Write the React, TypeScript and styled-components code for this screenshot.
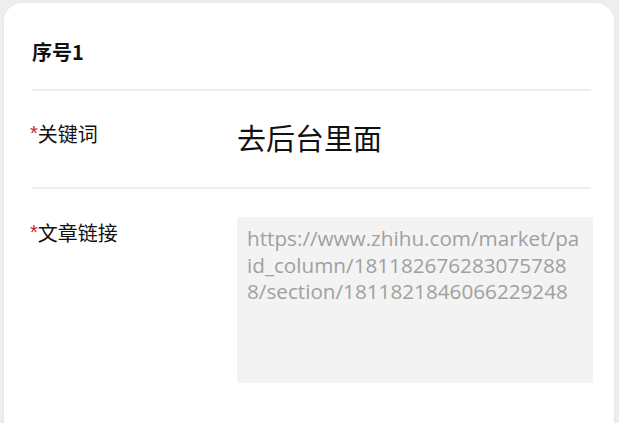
import React from "react";
import styled, { createGlobalStyle } from "styled-components";

const GlobalStyle = createGlobalStyle`
  html, body {
    margin: 0;
    padding: 0;
    background: #eeeeee;
    font-family: "Open Sans", "Noto Sans CJK SC", sans-serif;
    overflow: hidden;
  }
`;

const Card = styled.div`
  margin: 3px 5px 0 4px;
  min-height: 440px;
  background: #ffffff;
  border-radius: 18px 18px 0 0;
  box-shadow: 0 0 3px rgba(0, 0, 0, 0.06);
  padding: 0 21px 0 28px;
  box-sizing: border-box;
`;

const Header = styled.div`
  padding: 31px 0 19px 0;
  margin-right: 2px;
  border-bottom: 2px solid #eeeeee;
`;

const Title = styled.h2`
  margin: 0;
  font-family: "Noto Sans CJK SC", sans-serif;
  font-size: 20px;
  line-height: 36px;
  font-weight: 700;
  color: #111111;
`;

const Row = styled.div<{ divider?: boolean; pad: number }>`
  display: flex;
  align-items: flex-start;
  padding-top: ${(p) => p.pad}px;
  min-height: 98px;
  box-sizing: border-box;
  margin-right: ${(p) => (p.divider ? 2 : 0)}px;
  border-bottom: ${(p) => (p.divider ? "2px solid #eeeeee" : "none")};
`;

const Label = styled.div<{ offset: number }>`
  width: 205px;
  flex-shrink: 0;
  margin-top: ${(p) => p.offset}px;
  font-family: "Noto Sans CJK SC", sans-serif;
  font-size: 20px;
  line-height: 28px;
  color: #111111;
`;

const Star = styled.span`
  margin-left: -2px;
  color: #c8202a;
  font-family: "Liberation Sans", sans-serif;
  font-size: 20px;
  vertical-align: 2px;
`;

const Value = styled.div`
  margin-top: -1px;
  font-family: "Noto Sans CJK SC", sans-serif;
  font-size: 29px;
  line-height: 36px;
  color: #111111;
`;

const TextBox = styled.div`
  flex: 1;
  height: 166px;
  box-sizing: border-box;
  padding: 8px 6px 10px 10px;
  background: #f3f3f3;
  color: #a0a0a0;
  font-family: "Open Sans", sans-serif;
  font-size: 20.7px;
  line-height: 26.5px;
  word-break: break-all;
`;

const TextLine = styled.span`
  display: block;
  white-space: nowrap;
`;

// the link as it wraps in the original field
const linkLines = [
  "https://www.zhihu.com/market/pa",
  "id_column/181182676283075788",
  "8/section/1811821846066229248",
];

export default function App() {
  return (
    <>
      <GlobalStyle />
      <Card>
        <Header>
          <Title>序号1</Title>
        </Header>
        <Row divider pad={29}>
          <Label offset={-1}>
            <Star>*</Star>关键词
          </Label>
          <Value>去后台里面</Value>
        </Row>
        <Row pad={28}>
          <Label offset={1}>
            <Star>*</Star>文章链接
          </Label>
          <TextBox>
            {linkLines.map((line) => (
              <TextLine key={line}>{line}</TextLine>
            ))}
          </TextBox>
        </Row>
      </Card>
    </>
  );
}
